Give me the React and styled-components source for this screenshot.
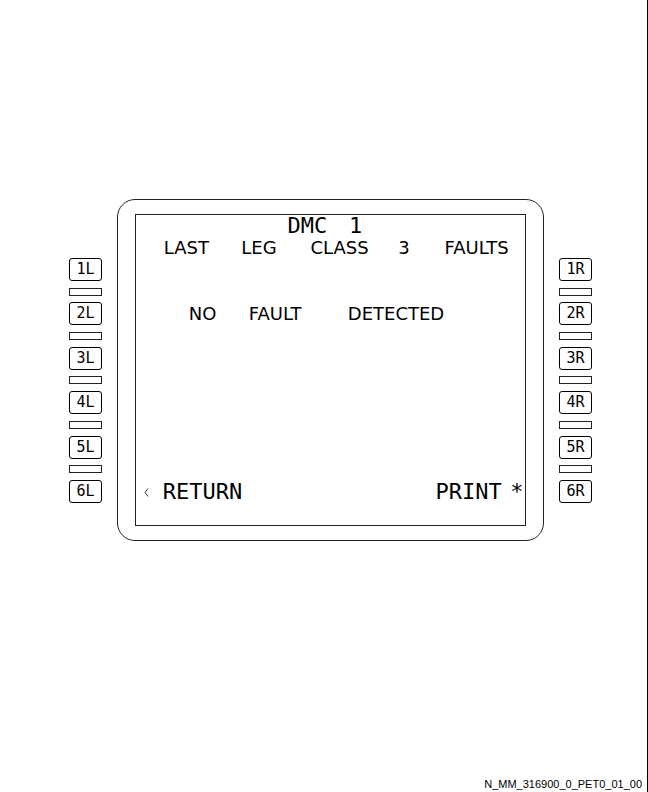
import React from "react";
import styled, { createGlobalStyle } from "styled-components";

const GlobalStyle = createGlobalStyle`
  *, *::before, *::after { box-sizing: border-box; }
  body { margin: 0; background: #fff; color: #000; }
`;

const Page = styled.div`
  display: flex;
  flex-direction: column;
  justify-content: space-between;
  min-height: 100vh;
  padding-top: 199px;
  border-right: 1px solid #000;
`;

const Unit = styled.main`
  display: grid;
  grid-template-columns: 33px minmax(0, 1fr) 33px;
  column-gap: 15px;
  padding: 0 55px 0 69px;
`;

const KeyColumn = styled.div`
  display: flex;
  flex-direction: column;
  justify-content: space-between;
  padding: 59px 0 38px;
`;

const LineKey = styled.button`
  height: 23px;
  padding: 0;
  border: 1px solid #000;
  border-radius: 3px;
  background: #fff;
  color: #000;
  font: 15px/21px "DejaVu Sans Mono", monospace;
  text-align: center;
`;

const Marker = styled.span`
  height: 8px;
  border: 1px solid #222;
`;

const Bezel = styled.section`
  padding: 14px 17px;
  border: 1px solid #222;
  border-radius: 18px;
`;

const Screen = styled.div`
  display: flex;
  flex-direction: column;
  height: 312px;
  padding: 0 0 22px 2px;
  border: 1px solid #222;
`;

const Line = styled.div`
  display: grid;
  grid-template-columns: repeat(24, minmax(0, 1fr));
  font-family: ${(p) => (p.$small ? '"DejaVu Sans"' : '"DejaVu Sans Mono"')}, sans-serif;
  font-size: ${(p) => (p.$small ? 18 : 22)}px;
  line-height: 22px;
  white-space: nowrap;
`;

const Title = styled(Line).attrs({ as: "h1" })`
  margin: 0;
  font-weight: 400;
`;

const Message = styled(Line)`
  margin-top: 44px;
`;

const Actions = styled(Line)`
  margin-top: auto;
`;

const Word = styled.span`
  display: flex;
  justify-content: center;
  grid-row: 1;
  grid-column: ${(p) => p.$col} / span ${(p) => p.$span};
`;

const Caret = styled.svg`
  grid-row: 1;
  grid-column: 1;
  align-self: center;
  justify-self: center;
  width: 5px;
  height: 9px;
`;

const Reference = styled.footer`
  padding: 0 5px 1px 0;
  font: 11px/14px "Liberation Sans", sans-serif;
  text-align: right;
`;

/* Each word starts at its column on the 24-column display. */
function Words({ text, start }) {
  let col = start;
  return text.split(" ").map((word, i) => {
    const at = col;
    col += word.length + 1;
    return (
      <React.Fragment key={i}>
        {i > 0 && " "}
        <Word $col={at} $span={word.length}>{word}</Word>
      </React.Fragment>
    );
  });
}

function Keys({ side }) {
  return (
    <KeyColumn>
      {[1, 2, 3, 4, 5, 6].map((n) => (
        <React.Fragment key={n}>
          {n > 1 && <Marker />}
          <LineKey type="button">{`${n}${side}`}</LineKey>
        </React.Fragment>
      ))}
    </KeyColumn>
  );
}

export default function App() {
  return (
    <>
      <GlobalStyle />
      <Page>
        <Unit>
          <Keys side="L" />
          <Bezel>
            <Screen>
              <Title><Words text="DMC 1" start={10} /></Title>
              <Line $small><Words text="LAST LEG CLASS 3 FAULTS" start={2} /></Line>
              <Message $small><Words text="NO FAULT DETECTED" start={4} /></Message>
              <Actions>
                <Caret viewBox="0 0 5 9" fill="none" stroke="#333" aria-hidden="true">
                  <path d="M4 .5 1 4.5 4 8.5" />
                </Caret>
                <Words text="RETURN" start={2} />
                <Words text="PRINT" start={19} />
                <Words text="*" start={24} />
              </Actions>
            </Screen>
          </Bezel>
          <Keys side="R" />
        </Unit>
        <Reference>N_MM_316900_0_PET0_01_00</Reference>
      </Page>
    </>
  );
}
